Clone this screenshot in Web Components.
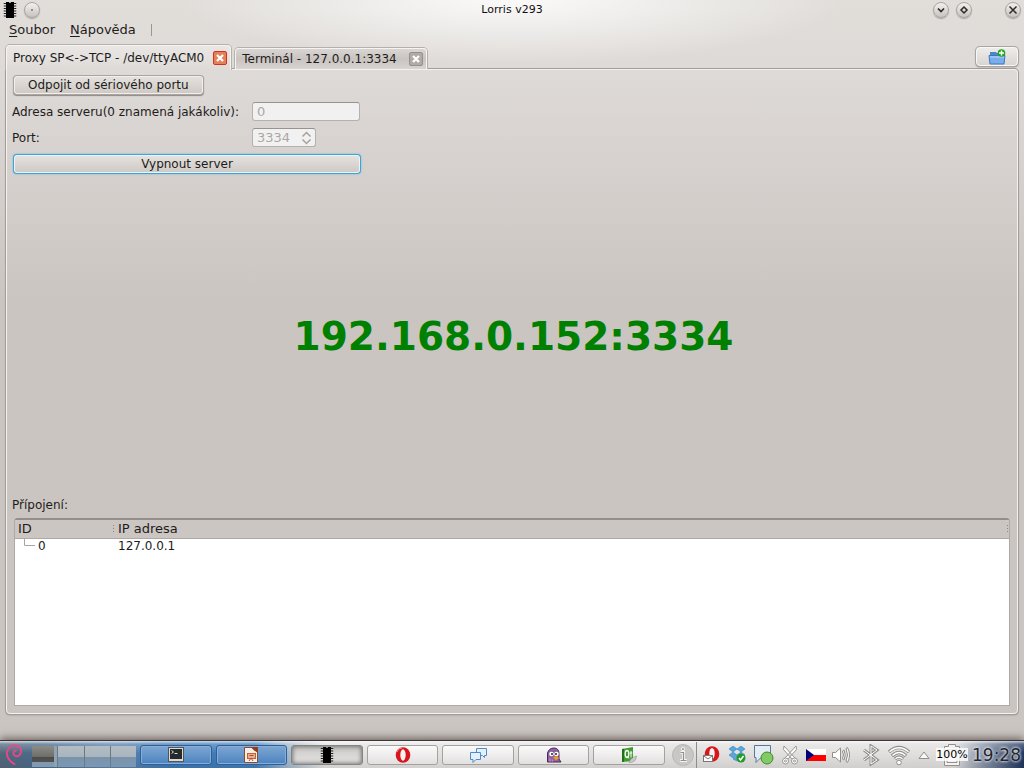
<!DOCTYPE html>
<html lang="cs">
<head>
<meta charset="utf-8">
<title>Lorris v293</title>
<style>
html,body{margin:0;height:100%}
body{font:13px/16px "DejaVu Sans",sans-serif;color:#1e1c1b;overflow:hidden}
</style>
</head>
<body>
<lorris-desktop></lorris-desktop>

<template id="t-desktop">
<style>
:host{display:flex;flex-direction:column;height:100vh;
background:radial-gradient(ellipse 330px 64px at 50% 0,rgba(255,255,255,.85),rgba(255,255,255,0)),linear-gradient(#e1deda 0,#dedad7 70px,#cbc5c1 300px)}
main{flex:1;display:flex;flex-direction:column;padding:5px 5px 26px;min-height:0}
proxy-panel{flex:1;min-height:0}
.strip{display:flex;align-items:flex-end;height:24px;position:relative;z-index:1}
.strip add-button{margin-left:auto}
</style>
<window-title>Lorris v293</window-title>
<menu-bar></menu-bar>
<main>
<div class="strip">
<doc-tab active>Proxy SP&lt;-&gt;TCP - /dev/ttyACM0</doc-tab>
<doc-tab>Terminál - 127.0.0.1:3334</doc-tab>
<add-button></add-button>
</div>
<proxy-panel></proxy-panel>
</main>
<task-bar></task-bar>
</template>

<template id="t-title">
<style>
:host{display:grid;grid-template-columns:1fr auto 1fr;align-items:center;height:20px;font-size:11px;color:#111}
.l,.r{display:flex;align-items:center}
.l{gap:6px;padding-left:2px}
.r{justify-content:flex-end;gap:7px;padding-right:3px}
.x{margin-left:26px}
button{width:16px;height:16px;padding:0;border:1px solid #aaa5a1;border-radius:50%;background:linear-gradient(#f2f0ee,#c8c3bf);box-shadow:0 1px 1px rgba(0,0,0,.25);display:grid;place-items:center}
svg{display:block}
</style>
<div class="l"><chip-icon></chip-icon><button aria-label="Menu okna"><svg width="4" height="4"><circle cx="2" cy="2" r="1" fill="#777"/></svg></button></div>
<span><slot></slot></span>
<div class="r">
<button aria-label="Minimalizovat"><svg width="10" height="10" fill="none" stroke="#2d2b2a" stroke-width="1.7"><path d="M2 3.5 5 6.5 8 3.5"/></svg></button>
<button aria-label="Maximalizovat"><svg width="10" height="10" fill="none" stroke="#2d2b2a" stroke-width="1.5"><path d="M5 2 8 5 5 8 2 5z"/></svg></button>
<button class="x" aria-label="Zavřít"><svg width="10" height="10" fill="none" stroke="#2d2b2a" stroke-width="1.5"><path d="M1.5 1.5 8.5 8.5M8.5 1.5 1.5 8.5"/></svg></button>
</div>
</template>

<template id="t-chip">
<style>:host{display:block;width:16px;height:16px}svg{display:block}</style>
<svg width="16" height="16"><path d="M4 0h3a1 1 0 0 0 2 0h3v16H4z" fill="#000"/><path d="M3 1v15M13 1v15" stroke="#222" stroke-width="2.500" stroke-dasharray="1 1.500"/></svg>
</template>

<template id="t-menu">
<style>
:host{display:flex;align-items:center;height:20px;padding-left:9px;gap:15px}
a{color:inherit;text-decoration:none}
u{text-underline-offset:2px}
i{width:1px;height:12px;background:#9b9692}
</style>
<a href="#soubor"><u>S</u>oubor</a><a href="#napoveda"><u>N</u>ápověda</a><i></i>
</template>

<template id="t-tab">
<style>
:host{display:flex;align-items:center;justify-content:space-between;box-sizing:border-box;height:21px;min-width:192px;margin-left:4px;padding:0 3px 0 6px;gap:9px;border:1px solid #f6f4f3;border-bottom:0;border-radius:4px 4px 0 0;background:linear-gradient(#d9d5d2,#c9c4c0 50%,#d8d4d1);box-shadow:0 0 0 1px #b5b0ac;clip-path:inset(-2px -2px 0 -2px);white-space:nowrap;font-size:12px}
:host([active]){height:25px;margin:0 0 -1px 1px;background:linear-gradient(#e9e6e4,#dedbd7)}
button{width:14px;height:14px;padding:0;border:1px solid #93908d;border-radius:2px;background:#b0aba7;display:grid;place-items:center}
:host([active]) button{border-color:#d8301e;background:#e2815a}
svg{display:block}
</style>
<slot></slot><button aria-label="Zavřít kartu"><svg width="8" height="8" stroke="#fff" stroke-width="2.200"><path d="M1 1 7 7M7 1 1 7"/></svg></button>
</template>

<template id="t-add">
<style>
:host{display:block;align-self:flex-start}
button{width:42px;height:19px;margin:2px 1px 0 0;padding:0;border:1px solid #f8f7f6;border-radius:4px;background:linear-gradient(#eeecea,#d9d5d2);box-shadow:0 0 0 1px #aaa5a1,0 1px 2px #777;display:grid;place-items:center}
svg{display:block}
</style>
<button aria-label="Nová karta"><svg width="18" height="16"><path d="M2 3h6l1 1h7v11H2z" fill="#4c86c9"/><path d="M3 6h12l1-1v9H3z" fill="#8cbcf1"/><path d="M1 6.500h16l-1 8.500H2z" fill="#79aeea" stroke="#3b78c4"/><path d="M2 8h14" stroke="#b9d8fa"/><circle cx="13.500" cy="4" r="3.800" fill="#23a31f"/><path d="M13.500 1.500v5M11 4h5" stroke="#fff" stroke-width="1.500"/></svg></button>
</template>

<template id="t-panel">
<style>
:host{display:flex;flex-direction:column;box-sizing:border-box;border:1px solid #f4f2f1;border-radius:0 4px 4px 4px;box-shadow:0 0 0 1px #a29d99,0 1px 2px #8a8581;padding:6px 7px 7px 5px;margin:0 1px 0 1px}
.b{height:18px;padding:0 13px;margin-left:2px;border:1px solid #f1efed;border-radius:3px;background:linear-gradient(#e4e1de,#cfcac6);box-shadow:0 0 0 1px #aaa5a1,0 1px 1px 1px #8f8a86;font:inherit;font-size:12px;color:inherit;line-height:16px;align-self:flex-start}
form{display:grid;grid-template-columns:240px 108px;row-gap:7px;align-items:center;margin-top:8px}
label{white-space:nowrap;font-size:12px}
input{box-sizing:border-box;width:100%;height:19px;padding:0 4px;border:1px solid #b6b1ad;border-top-color:#98938f;border-radius:3px;background:#f2f1f1;color:#aaa8a6;font:inherit;line-height:16px;appearance:textfield;-moz-appearance:textfield;margin:0;display:block}
input::-webkit-inner-spin-button{appearance:none;display:none}
.spin{display:grid;width:64px}
.spin>*{grid-area:1/1}
.spin svg{justify-self:end;align-self:center;margin-right:4px}
.main{grid-column:1/-1;align-self:auto;margin:1px 0 0 2px;border-color:#eef3f6;box-shadow:0 0 0 1px #3fa3d6,0 0 2px 1px #62b6e0}
.addr{flex:1;display:grid;place-items:center;padding:3px 0 0 5px;font:bold 39px/48px "DejaVu Sans",sans-serif;color:#008000}
conn-table{height:188px;margin:5px 0 0 2px}
p{margin:0;font-size:12px}
</style>
<button class="b">Odpojit od sériového portu</button>
<form onsubmit="return false">
<label for="a">Adresa serveru(0 znamená jakákoliv):</label><input id="a" value="0" disabled>
<label for="p">Port:</label><div class="spin"><input id="p" type="number" value="3334" disabled><svg width="11" height="14" fill="none" stroke="#a5a19e" stroke-width="1.500"><path d="M1.500 5.500 5.500 1.500 9.500 5.500M1.500 8.500 5.500 12.500 9.500 8.500"/></svg></div>
<button class="b main" type="button">Vypnout server</button>
</form>
<div class="addr">192.168.0.152:3334</div>
<p>Přípojení:</p>
<conn-table></conn-table>
</template>

<template id="t-table">
<style>
:host{display:block;box-sizing:border-box;border:1px solid #aea9a5;border-top:2px solid #938e8a;border-radius:4px 4px 1px 1px;background:#fff;overflow:hidden}
table{width:100%;border-collapse:collapse;table-layout:fixed}
th{height:18px;padding:0 0 0 3px;text-align:left;font-weight:normal;background:#cbc6c2;border-bottom:1px solid #aea9a5}
th span{display:flex;justify-content:space-between;align-items:center}
i{width:1px;height:9px;background:repeating-linear-gradient(#8c8783 0 1px,transparent 1px 3px);margin-right:1px}
td{height:14px;padding:0 0 0 3px;line-height:14px;font-size:12px}
.id{padding-left:9px}
.id svg{vertical-align:top;margin-right:3px}
</style>
<table><colgroup><col style="width:100px"><col></colgroup>
<thead><tr><th><span>ID<i></i></span></th><th><span>IP adresa<i></i></span></th></tr></thead>
<tbody><tr><td class="id"><svg width="11" height="14" fill="none" stroke="#aaa5a1"><path d="M.5 0V6.500H11"/></svg>0</td><td>127.0.0.1</td></tr></tbody></table>
</template>

<template id="t-taskbar">
<style>
:host{display:flex;align-items:center;box-sizing:border-box;height:28px;border-top:1px solid #35353c;box-shadow:0 -2px 8px rgba(60,45,40,.65);
background:linear-gradient(rgba(255,255,255,.75) 0,rgba(255,255,255,.25) 3px,rgba(255,255,255,0) 12px,rgba(0,0,0,.08)),linear-gradient(90deg,#54687c 0,#4a6a8c 40px,#5b83ad 110px,#3f78b4 170px,#4180bd 255px,#a8bccd 290px,#e5e3e2 325px,#e2e0de calc(100% - 70px),#8793a8 calc(100% - 40px),#1f355f)}
svg{display:block}
.start{width:27px;height:26px;border:0;padding:0;background:none;display:grid;place-items:center}
.pager{display:grid;grid-template-columns:repeat(4,1fr);width:104px;height:21px;margin:5px 4px 0 5px;gap:1px;background:#6a7986;align-self:flex-start}
.pager i{background:linear-gradient(#b4bcc3,#a9b5bf 50%,#7a93aa 52%,#7b97b3)}
.pager i:first-child{background:linear-gradient(90deg,transparent 22px,#8fa3b5 22px),linear-gradient(#8b8b87,#6e6e6b 50%,#4a4a48 51%,#535452 76%,#7f9ab1 77%)}
.tasks{flex:1;display:flex;gap:4px}
tray-icons{margin-left:6px}
time{width:56px;box-sizing:border-box;padding-left:4px;font-size:17px;line-height:20px;color:#23262c;text-shadow:0 0 3px #fff,0 0 3px #d8dce4;white-space:nowrap}
</style>
<button class="start" aria-label="Nabídka"><svg width="18" height="21" fill="none" stroke="#f04585" stroke-linecap="round"><path d="M9.500 20C4 17 1.500 13 2 8 3 3 7 1 10.500 1.500c4 .5 6 3.500 5.500 6.500-.5 3.500-4 5-6 3.800C7.500 10.500 8 7 11 6.500" stroke-width="1.800"/></svg></button>
<div class="pager"><i></i><i></i><i></i><i></i></div>
<div class="tasks">
<task-button tone="blue" label="Terminál"><svg width="16" height="15"><rect x=".5" y=".5" width="15" height="14" fill="#d9d9d6" stroke="#555"/><rect x="2" y="2" width="12" height="10" fill="#262a2a"/><path d="M3.500 3.500 5.500 5 3.500 6.500M6.500 6.500h3" stroke="#ddd" fill="none"/></svg></task-button>
<task-button tone="blue" label="Prezentace"><svg width="14" height="16"><path d="M.5.5H10L13.500 4V15.500H.5z" fill="#f5efe9" stroke="#8d4a28"/><path d="M7 0h7v6C12 5 9 3 7 0" fill="#8c3f1d"/><rect x="3.500" y="6.500" width="8" height="5" fill="#e9ad8b" stroke="#bf6039"/><path d="M5 14l2-3 2 3M5.500 8.500h4" stroke="#b44c23" fill="none"/></svg></task-button>
<task-button tone="down" label="Lorris"><chip-icon></chip-icon></task-button>
<task-button label="Opera"><svg width="16" height="16"><ellipse cx="8" cy="8" rx="7.300" ry="7.800" fill="#d6161c"/><ellipse cx="8" cy="8" rx="2.700" ry="5.800" fill="#f4f1f0"/><path d="M2 5Q3 1 7 1" stroke="#f58c83" fill="none"/></svg></task-button>
<task-button label="Zprávy"><svg width="17" height="16" fill="#e4f0fb" stroke="#4d8bca"><path d="M6.500 1.500h10v7h-2v2l-2-2h-6z"/><path d="M.5 5.500h10v7H6l-3 3v-3H.5z"/></svg></task-button>
<task-button label="Pidgin"><svg width="16" height="16"><path d="M1.500 15V6Q3 1 8 1t5 6v5l2 3H1.500z" fill="#8d62a0" stroke="#49275a"/><path d="M4 11.500v3M6.500 12.500v2" stroke="#b48cc4" stroke-width="1.500"/><circle cx="5.500" cy="7" r="2.300" fill="#fff"/><circle cx="10.500" cy="7" r="2.300" fill="#fff"/><circle cx="6" cy="7" r="1" fill="#222"/><circle cx="10" cy="7" r="1" fill="#222"/><path d="M7 10l4-1 2 2-3 2.500z" fill="#f19a25"/></svg></task-button>
<task-button label="Qt Creator"><svg width="16" height="16"><path d="M1 2 12 0v14L1 15z" fill="#3f9d2e"/><path d="M1 2 3 1.700V14.800L1 15z" fill="#23701a"/><ellipse cx="6" cy="7" rx="1.800" ry="3.500" fill="none" stroke="#fff" stroke-width="1.300"/><path d="M6.500 9.500l1.500 2M10 4v6.500M8.800 6h2.500" stroke="#fff"/><path d="M8 15.500Q9 11 15.500 9q0 6.500-7.500 6.500" fill="#c8c8c8" stroke="#888" stroke-width=".5"/></svg></task-button>
</div>
<tray-icons></tray-icons>
<time>19:28</time>
</template>

<template id="t-task">
<style>
:host{display:block;flex:1}
button{box-sizing:border-box;width:100%;height:20px;padding:0;border:1px solid #a5a1a0;border-radius:3px;background:linear-gradient(#fbfafa,#e2e0df);display:grid;place-items:center}
:host([tone=blue]) button{border-color:#2f5f94;background:linear-gradient(#7fa7d2,#4b83bf);box-shadow:inset 0 0 0 1px #86aeda}
:host([tone=down]) button{border-color:#868482;background:linear-gradient(#c9c8c7,#e6e4e3);box-shadow:inset 0 0 4px 1px #777}
</style>
<button><slot></slot></button>
</template>

<template id="t-tray">
<style>
:host{display:grid;grid-template-columns:24px 3px 26px 26px 26px 28px 24px 28px 30px 26px 24px 32px;align-items:center;justify-items:center;height:26px}
svg{display:block}
.sep{width:1px;height:26px;background:#8f8c8a}
.bat{display:grid;place-items:center;font-size:11px;line-height:13px;color:#000}
.bat>*{grid-area:1/1}
.bat span{background:rgba(255,255,255,.8);z-index:1}
</style>
<svg width="22" height="22"><circle cx="11" cy="11" r="10.500" fill="#c9c7c5" stroke="#b9b7b5"/><path d="M8.500 8.500h3v7.500M8 16.500h7" stroke="#f4f3f2" stroke-width="3" fill="none"/><circle cx="11" cy="5" r="2" fill="#f4f3f2"/><path d="M8.500 8.500h3v7.500M8.500 16.500h6" stroke="#929090" stroke-width="1.200" fill="none"/><circle cx="11" cy="5" r="1" fill="#929090"/></svg>
<i class="sep"></i>
<svg width="17" height="17"><ellipse cx="9" cy="8" rx="7.300" ry="7.800" fill="#d6161c"/><ellipse cx="9" cy="7.500" rx="2.700" ry="5.500" fill="#f4f1f0"/><rect x=".5" y="9.500" width="9" height="6" fill="#fff" stroke="#777"/><path d="M1 10l4 3 4-3" stroke="#777" fill="none"/></svg>
<svg width="18" height="17"><path d="M5 0 9 3 5 6 1 3zM13 0l4 3-4 3-4-3zM5 6l4 3-4 3-4-3zM13 6l4 3-4 3-4-3zM5 13l4-3 4 3-4 2z" fill="#54a7df" stroke="#2a78b5" stroke-width=".5"/><circle cx="13" cy="12" r="4.500" fill="#239c27"/><path d="M11 12l1.500 2 3-4" fill="none" stroke="#fff" stroke-width="1.500"/></svg>
<svg width="21" height="21"><path d="M1.500 1.500h16v12H8l-5 5v-5H1.500z" fill="#e5edf4" stroke="#57789a"/><circle cx="14" cy="14" r="6" fill="#83c966" stroke="#398d29"/></svg>
<svg width="18" height="20" fill="#fff" stroke="#999694"><path d="M3 1 2.500 4.500 11 14l3-1zM15 1l.5 3.500L7 14l-3-1z"/><circle cx="4.500" cy="16" r="3"/><circle cx="13.500" cy="16" r="3"/><circle cx="4.500" cy="16" r="1"/><circle cx="13.500" cy="16" r="1"/></svg>
<svg width="20" height="12"><path d="M0 0h20v6H0z" fill="#fff"/><path d="M0 6h20v6H0z" fill="#f00"/><path d="M0 0 8 6 0 12z" fill="#00007b"/></svg>
<svg width="20" height="20" fill="#fff" stroke="#918f8d"><path d="M.5 7.500h3L8.500 3v14l-5-4.500h-3z"/><path d="M10.500 6q2 4 0 8l1.500 1q2.500-5 0-10zM14 3.500q3 6.500 0 13l1.500 1q4-7.500 0-15z"/></svg>
<svg width="18" height="22" fill="none"><path d="M2 6 15 16 9 20V2l6 4L2 16" stroke="#918f8d" stroke-width="3"/><path d="M2 6 15 16 9 20V2l6 4L2 16" stroke="#fff"/></svg>
<svg width="24" height="22" fill="none"><path d="M2 8q10-9 20 0M5 12q7-7 14 0M8 15q4-4 8 0" stroke="#918f8d" stroke-width="3.500"/><path d="M2.500 7.800q9.500-8 19 0M5.500 11.500q6.500-6 13 0M8.500 14.700q3.500-3 7 0" stroke="#fff" stroke-width="1.500"/><circle cx="12" cy="18.500" r="2.300" fill="#fff" stroke="#918f8d"/></svg>
<svg width="12" height="8"><path d="M1 7.500 6 1l5 6.500z" fill="#f8f7f6" stroke="#918f8d"/></svg>
<div class="bat"><svg width="20" height="24" fill="#f4f3f2" stroke="#918f8d"><path d="M2.500 3.500h4v-2h7v2h4v19h-15z"/><path d="M5 6.500h10v13H5z"/></svg><span>100%</span></div>
</template>

<script>
const define = (name, id) => customElements.define(name, class extends HTMLElement {
  constructor() {
    super();
    this.attachShadow({mode: 'open'}).append(document.getElementById(id).content.cloneNode(true));
  }
  connectedCallback() {
    const label = this.getAttribute('label');
    if (label) this.shadowRoot.querySelector('button').setAttribute('aria-label', label);
  }
});
define('chip-icon', 't-chip');
define('window-title', 't-title');
define('menu-bar', 't-menu');
define('doc-tab', 't-tab');
define('add-button', 't-add');
define('conn-table', 't-table');
define('proxy-panel', 't-panel');
define('task-button', 't-task');
define('tray-icons', 't-tray');
define('task-bar', 't-taskbar');
define('lorris-desktop', 't-desktop');
</script>
</body>
</html>
